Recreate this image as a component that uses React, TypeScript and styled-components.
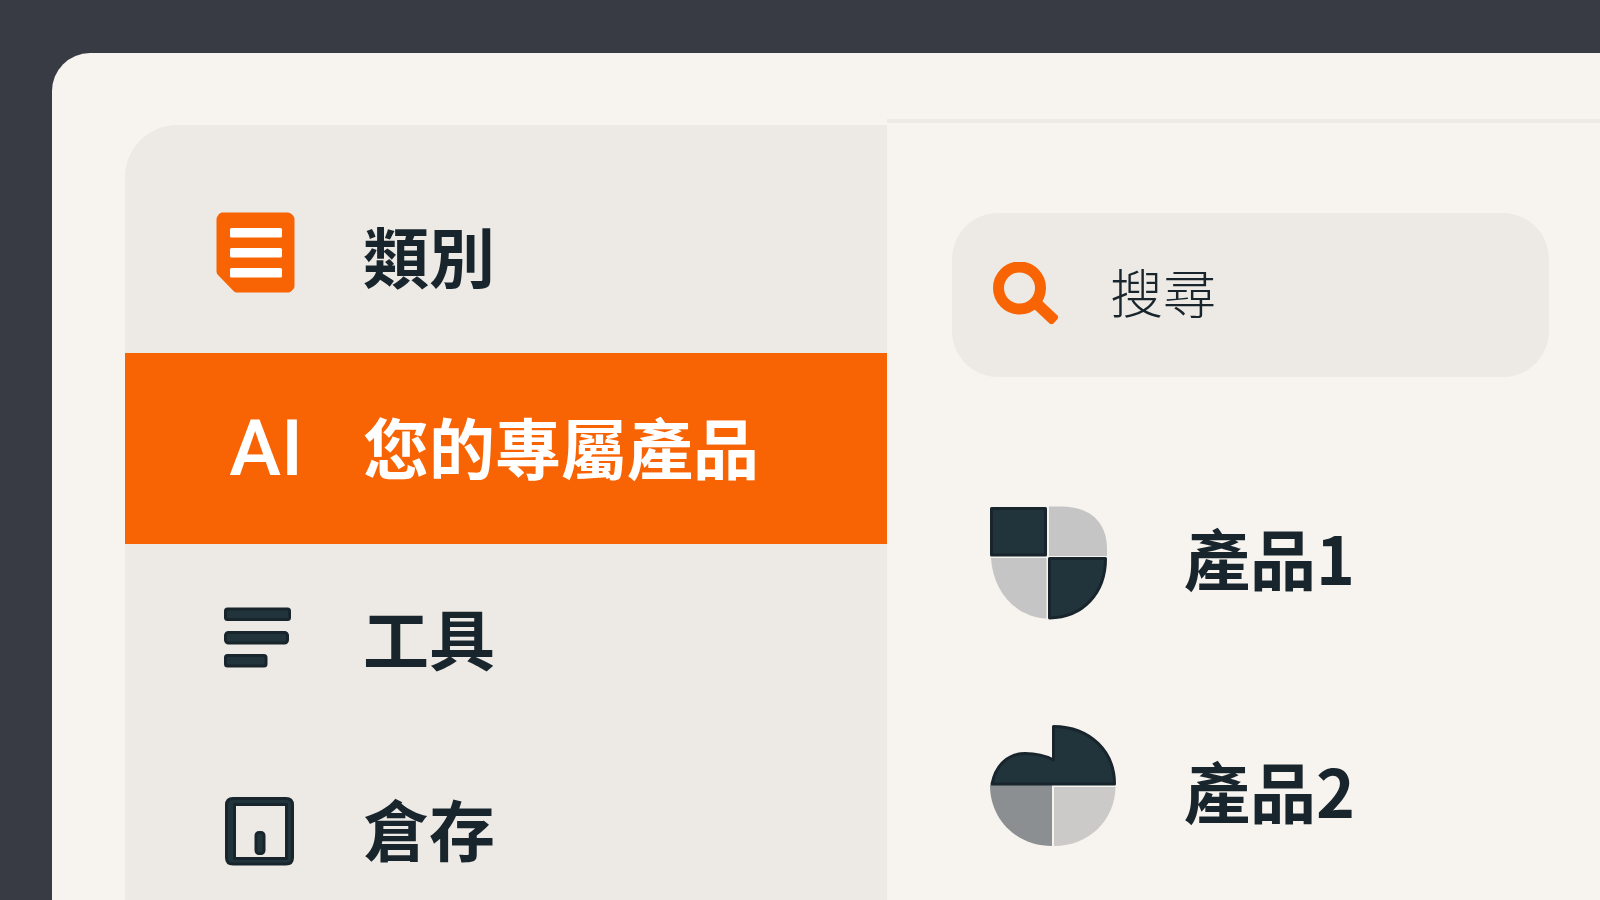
import React from "react";
import styled, { createGlobalStyle } from "styled-components";

const color = {
  backdrop: "#383b44",
  surface: "#f7f4ef",
  muted: "#edeae5",
  accent: "#f86403",
  ink: "#18252d",
  slate: "#22343b",
  grey: "#8b8f92",
  silver: "#c5c5c5",
};

const GlobalStyle = createGlobalStyle`
  *, *::before, *::after { box-sizing: border-box; }
  body {
    margin: 0;
    background: ${color.backdrop};
    color: ${color.ink};
    font-family: "Noto Sans CJK TC", "Noto Sans", sans-serif;
  }
`;

const Page = styled.div`
  display: flex;
  min-height: 100vh;
  padding: 53px 0 0 52px;
  background: ${color.backdrop};
`;

const Window = styled.div`
  flex: 1;
  min-width: 0;
  display: grid;
  grid-template-columns: minmax(0, 762px) minmax(0, 1fr);
  padding: 66px 0 0 73px;
  border-top-left-radius: 38px;
  background: ${color.surface};
`;

const Sidebar = styled.nav`
  margin-top: 6px;
  padding-top: 37px;
  border-top-left-radius: 52px;
  background: ${color.muted};
`;

const List = styled.ul`
  margin: 0;
  padding: 0;
  list-style: none;
`;

const NavLink = styled.a<{ $active?: boolean }>`
  display: flex;
  align-items: center;
  gap: 60px;
  height: 191px;
  padding-left: 88px;
  text-decoration: none;
  color: ${(p) => (p.$active ? "#fff" : color.ink)};
  background: ${(p) => (p.$active ? color.accent : "transparent")};
`;

const Label = styled.span`
  padding-bottom: 8px;
  font-size: 66px;
  font-weight: 700;
  line-height: 96px;
  white-space: nowrap;
`;

const NavIcon = styled.svg`
  flex: none;
  width: 90px;
  height: 91px;
`;

const AiMark = styled.span`
  flex: none;
  width: 90px;
  font-family: Roboto, "Liberation Sans", sans-serif;
  font-size: 78px;
  font-weight: 500;
  line-height: 96px;
  text-align: right;
`;

const Content = styled.main`
  padding: 90px 51px 0 65px;
  border-top: 4px solid ${color.muted};
`;

const SearchBox = styled.label`
  display: flex;
  align-items: center;
  gap: 51px;
  height: 164px;
  padding: 0 41px;
  border-radius: 46px;
  background: ${color.muted};
`;

const SearchIcon = styled.svg`
  flex: none;
  width: 66px;
  height: 66px;
`;

const SearchInput = styled.input`
  flex: 1;
  min-width: 0;
  padding: 0 0 8px;
  border: 0;
  outline: 0;
  background: none;
  color: ${color.ink};
  font-family: inherit;
  font-size: 53px;
  font-weight: 300;
  line-height: 80px;

  &::placeholder {
    color: ${color.ink};
    opacity: 1;
  }
`;

const Products = styled(List)`
  margin-top: 66px;
`;

const Product = styled.li`
  display: flex;
  align-items: center;
  gap: 67px;
  height: 233px;
  padding-left: 37px;
`;

const ProductIcon = styled.svg`
  flex: none;
  width: 128px;
  height: 137px;
`;

const CategoryIcon = () => (
  <NavIcon viewBox="0 0 90 91" aria-hidden="true">
    <path d="M9 .5H75Q77 .5 78.500 2L80 3.500Q81.500 5 81.500 7V74Q81.500 76 80 77.500L78.500 79Q77 80.500 75 80.500H24Q22 80.500 20.500 79L5 63Q3.500 61.500 3.500 59.500V7Q3.500 5 5 3.500L6 2Q7.500 .5 9 .5Z" fill={color.accent} />
    <g fill="#fff">
      <rect x="17" y="16" width="52" height="9.500" rx="1.500" />
      <rect x="17" y="36" width="52" height="9.500" rx="1.500" />
      <rect x="17" y="56" width="52" height="9.500" rx="1.500" />
    </g>
  </NavIcon>
);

const ToolsIcon = () => (
  <NavIcon viewBox="0 0 90 91" aria-hidden="true">
    <g fill={color.slate} stroke={color.ink} strokeWidth="3">
      <rect x="12.500" y="15" width="64" height="10.500" rx="2" />
      <rect x="12.500" y="38.500" width="62" height="10.500" rx="3" />
      <rect x="12.500" y="61.500" width="40.500" height="10.500" rx="2" />
    </g>
  </NavIcon>
);

const StockIcon = () => (
  <NavIcon viewBox="0 0 90 91" aria-hidden="true">
    <path
      fillRule="evenodd"
      fill={color.slate}
      stroke={color.ink}
      strokeWidth="3"
      d="M20 13.500H73Q79.500 13.500 79.500 20V72.500Q79.500 79 73 79H20Q13.500 79 13.500 72.500V20Q13.500 13.500 20 13.500ZM21.500 19.500V73.500H73.500V19.500Z"
    />
    <rect x="43" y="47.500" width="8" height="21" rx="3" fill={color.slate} stroke={color.ink} strokeWidth="3" />
  </NavIcon>
);

const ShieldChart = () => (
  <ProductIcon viewBox="0 0 128 137" aria-hidden="true">
    <path d="M60 15.500H72C102 15.500 118 32 118 58V65H60Z" fill={color.silver} />
    <path d="M2 67H57.500V127.500C24 125 4 99 2 67Z" fill={color.silver} />
    <g fill={color.slate} stroke={color.ink} strokeWidth="3" strokeLinejoin="round">
      <path d="M2.500 17.500H56.500V64H2.500Z" />
      <path d="M60.500 67.500H116.500C116.500 102 94 126.500 60.500 127Z" />
    </g>
  </ProductIcon>
);

const PieChart = () => (
  <ProductIcon viewBox="0 0 128 137" aria-hidden="true">
    <path d="M1 61H63V122C28 122 1 96 1 61Z" fill={color.grey} />
    <path d="M65 63H126.500C126 96 100 122 65 122Z" fill="#cbcac8" />
    <path
      d="M3 60C7 40 20 29.500 36 29.500C47 29.500 56 31.500 64.500 36V2.500C102 3 125.500 28 125.500 60Z"
      fill={color.slate}
      stroke={color.ink}
      strokeWidth="3"
      strokeLinejoin="round"
    />
  </ProductIcon>
);

export default function App() {
  return (
    <>
      <GlobalStyle />
      <Page>
        <Window>
          <Sidebar>
            <List>
              <li>
                <NavLink href="#categories">
                  <CategoryIcon />
                  <Label>類別</Label>
                </NavLink>
              </li>
              <li>
                <NavLink href="#for-you" $active aria-current="page">
                  <AiMark>AI</AiMark>
                  <Label>您的專屬產品</Label>
                </NavLink>
              </li>
              <li>
                <NavLink href="#tools">
                  <ToolsIcon />
                  <Label>工具</Label>
                </NavLink>
              </li>
              <li>
                <NavLink href="#stock">
                  <StockIcon />
                  <Label>倉存</Label>
                </NavLink>
              </li>
            </List>
          </Sidebar>
          <Content>
            <SearchBox>
              <SearchIcon viewBox="0 0 66 66" aria-hidden="true">
                <circle cx="26.500" cy="26" r="21" fill="none" stroke={color.accent} strokeWidth="11" />
                <path
                  d="M47 37L64.500 53.500Q66 55 64.500 57L60.500 61.500Q58.500 63 56.500 61.500L39 45Z"
                  fill={color.accent}
                />
              </SearchIcon>
              <SearchInput type="search" placeholder="搜尋" aria-label="搜尋" />
            </SearchBox>
            <Products>
              <Product>
                <ShieldChart />
                <Label>產品1</Label>
              </Product>
              <Product>
                <PieChart />
                <Label>產品2</Label>
              </Product>
            </Products>
          </Content>
        </Window>
      </Page>
    </>
  );
}
